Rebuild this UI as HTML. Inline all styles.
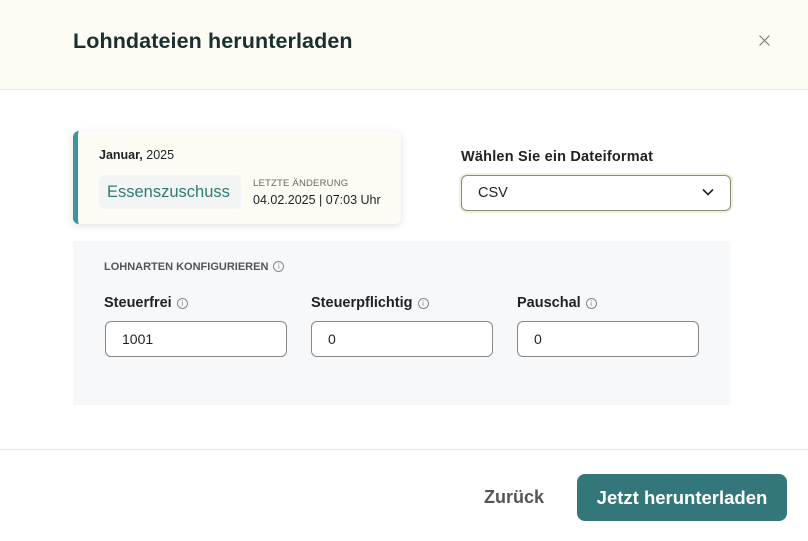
<!DOCTYPE html>
<html><head><meta charset="utf-8"><style>
*{box-sizing:border-box;margin:0;padding:0}
body{width:808px;height:541px;background:#fff;font-family:"Liberation Sans",sans-serif;color:#1c2326;position:relative;overflow:hidden}
.hdr{position:absolute;left:0;top:0;width:808px;height:90px;background:#fcfcf4;border-bottom:1px solid #e6e6e6}
.title{position:absolute;left:73px;top:29px;font-size:21.5px;font-weight:bold;color:#19302f;letter-spacing:0.1px}
.x{position:absolute;left:758px;top:34px}
.card{position:absolute;left:73px;top:131px;width:328px;height:93px;background:#fcfcf4;border-radius:6px;border-left:5px solid #3f939b;box-shadow:0 2px 8px rgba(0,0,0,0.12)}
.card .m{position:absolute;left:21px;top:17px;font-size:12.5px}
.chip{position:absolute;left:21px;top:44px;width:142px;height:34px;background:#f2f5f3;border-radius:6px;color:#2d7c74;font-size:16.5px;line-height:34px;padding-left:8px}
.lz{position:absolute;left:175px;top:47px;font-size:9.5px;color:#666;letter-spacing:0.2px}
.dt{position:absolute;left:175px;top:62px;font-size:12.5px}
.fl{position:absolute;left:461px;top:149px;font-size:14.5px;font-weight:bold;color:#222;letter-spacing:0.2px}
.sel{position:absolute;left:461px;top:175px;width:270px;height:36px;border:1px solid #8a8a7a;border-radius:6px;box-shadow:0 0 0 2px #f1f2da;font-size:14.5px;line-height:34px;padding-left:16px}
.sel svg{position:absolute;right:16px;top:12px}
.panel{position:absolute;left:73px;top:241px;width:658px;height:164px;background:#f7f8f9}
.ph{position:absolute;left:31px;top:20px;font-size:11px;color:#555;font-weight:bold;letter-spacing:0}
.lab{position:absolute;top:54px;font-size:14.5px;font-weight:bold;color:#222}
.inp{position:absolute;top:80px;width:182px;height:36px;background:#fff;border:1px solid #888;border-radius:6px;font-size:14px;line-height:34px;padding-left:16px}
.i{display:inline-block;width:11px;height:11px;border:1px solid #888;border-radius:50%;font-size:8px;line-height:9px;text-align:center;color:#888;font-weight:normal;vertical-align:1px;margin-left:5px}
.ftr{position:absolute;left:0;top:449px;width:808px;border-top:1px solid #e6e6e6}
.back{position:absolute;left:484px;top:487px;font-size:18px;font-weight:bold;color:#555}
.btn{position:absolute;left:577px;top:474px;width:210px;height:47px;background:#33777b;border-radius:8px;color:#fff;font-size:18.5px;font-weight:bold;text-align:center;line-height:47px}
</style></head><body>
<div class="hdr"><div class="title">Lohndateien herunterladen</div>
<svg class="x" width="13" height="13" viewBox="0 0 13 13"><path d="M1.5 1.5L11.5 11.5M11.5 1.5L1.5 11.5" stroke="#777" stroke-width="1.1"/></svg></div>
<div class="card"><div class="m"><b>Januar,</b> 2025</div><div class="chip">Essenszuschuss</div><div class="lz">LETZTE ÄNDERUNG</div><div class="dt">04.02.2025 | 07:03 Uhr</div></div>
<div class="fl">Wählen Sie ein Dateiformat</div>
<div class="sel">CSV<svg width="12" height="8" viewBox="0 0 12 8"><path d="M1 1.5L6 6.5L11 1.5" stroke="#222" stroke-width="1.6" fill="none"/></svg></div>
<div class="panel"><div class="ph">LOHNARTEN KONFIGURIEREN<span class="i">i</span></div>
<div class="lab" style="left:31px">Steuerfrei<span class="i">i</span></div>
<div class="lab" style="left:238px">Steuerpflichtig<span class="i">i</span></div>
<div class="lab" style="left:444px">Pauschal<span class="i">i</span></div>
<div class="inp" style="left:32px">1001</div>
<div class="inp" style="left:238px">0</div>
<div class="inp" style="left:444px">0</div></div>
<div class="ftr"></div>
<div class="back">Zurück</div>
<div class="btn">Jetzt herunterladen</div>
</body></html>
